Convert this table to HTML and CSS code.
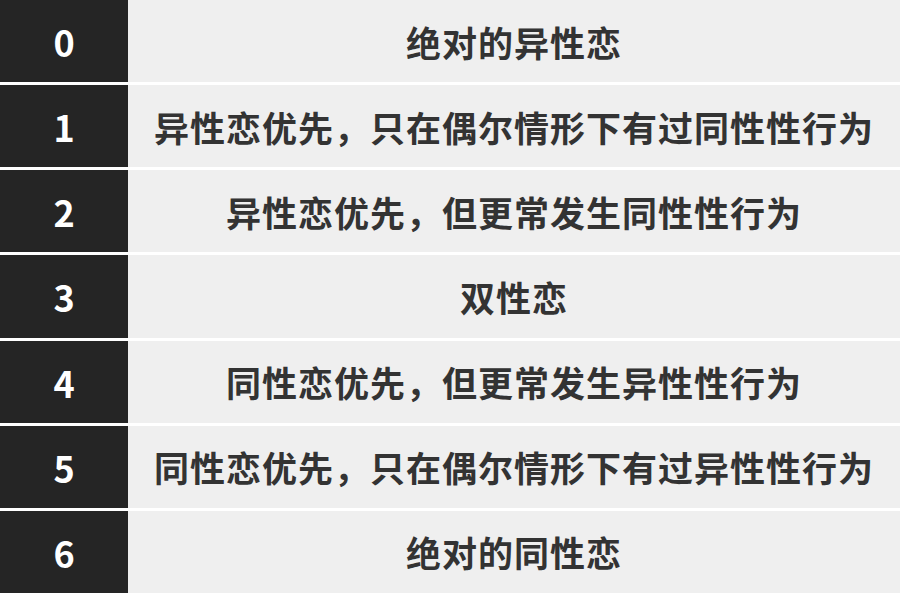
FILE: index.html
```html
<!DOCTYPE html>
<html lang="zh">
<head>
<meta charset="utf-8">
<link rel="stylesheet" href="styles.css">
</head>
<body>
<div class="scale">
  <div class="row"><div class="num">0</div><div class="desc">绝对的异性恋</div></div>
  <div class="row"><div class="num">1</div><div class="desc">异性恋优先，只在偶尔情形下有过同性性行为</div></div>
  <div class="row"><div class="num">2</div><div class="desc">异性恋优先，但更常发生同性性行为</div></div>
  <div class="row"><div class="num">3</div><div class="desc">双性恋</div></div>
  <div class="row"><div class="num">4</div><div class="desc">同性恋优先，但更常发生异性性行为</div></div>
  <div class="row"><div class="num">5</div><div class="desc">同性恋优先，只在偶尔情形下有过异性性行为</div></div>
  <div class="row"><div class="num">6</div><div class="desc">绝对的同性恋</div></div>
</div>
</body>
</html>
```
FILE: styles.css
```css
html, body {
  margin: 0;
  padding: 0;
  background: #ffffff;
}
.scale {
  width: 900px;
  height: 593px;
  display: grid;
  grid-template-rows: repeat(7, 1fr);
  row-gap: 3px;
  font-family: "Noto Sans CJK SC", "Noto Sans", sans-serif;
  font-weight: 700;
}
.row {
  display: grid;
  grid-template-columns: 128px 1fr;
}
.num {
  background: #252525;
  color: #ffffff;
  font-size: 36px;
  display: flex;
  align-items: center;
  justify-content: center;
}
.desc {
  background: #efefef;
  color: #333333;
  font-size: 35px;
  letter-spacing: 1px;
  display: flex;
  align-items: center;
  justify-content: center;
}
```
